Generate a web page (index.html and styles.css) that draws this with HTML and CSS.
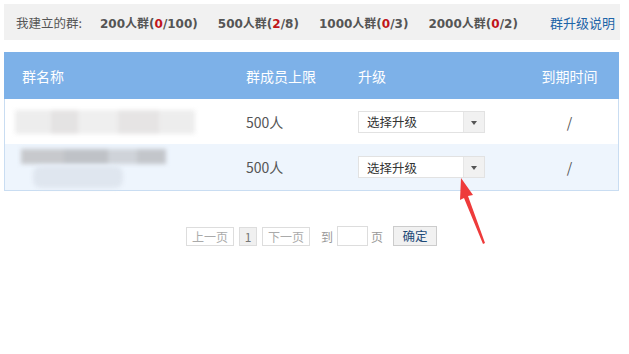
FILE: index.html
```html
<!DOCTYPE html>
<html lang="zh">
<head>
  <meta charset="UTF-8">
  <meta name="viewport" content="width=device-width, initial-scale=1.0">
  <title>群升级</title>
  <link rel="stylesheet" href="styles.css">
</head>
<body>

  <div class="page">
    <div class="group-bar">
      <span class="label">我建立的群:</span>
      <span class="quota">200人群(<em>0</em>/100)</span>
      <span class="quota">500人群(<em>2</em>/8)</span>
      <span class="quota">1000人群(<em>0</em>/3)</span>
      <span class="quota">2000人群(<em>0</em>/2)</span>
      <a class="help" href="#">群升级说明</a>
    </div>

    <div class="group-table">
      <div class="row head">
        <div class="cell name">群名称</div>
        <div class="cell">群成员上限</div>
        <div class="cell">升级</div>
        <div class="cell expire">到期时间</div>
      </div>
      <div class="row">
        <div class="cell name">
          <div class="mosaic one"></div>
        </div>
        <div class="cell">500人</div>
        <div class="cell">
          <div class="select"><span>选择升级</span><i class="caret"></i></div>
        </div>
        <div class="cell expire">/</div>
      </div>
      <div class="row alt">
        <div class="cell name">
          <div class="mosaic two"></div>
          <div class="mosaic smear"></div>
        </div>
        <div class="cell">500人</div>
        <div class="cell">
          <div class="select"><span>选择升级</span><i class="caret"></i></div>
        </div>
        <div class="cell expire">/</div>
      </div>
    </div>

    <div class="pager">
      <button class="pg">上一页</button>
      <button class="pg current">1</button>
      <button class="pg">下一页</button>
      <span class="to">到</span>
      <input class="page-input" type="text">
      <span class="unit">页</span>
      <button class="ok">确定</button>
    </div>

    <svg class="arrow" width="40" height="80" viewBox="0 0 40 80">
      <polygon points="10,3 22,20 17,21 34,68 32,69 13,23 9,25" fill="#ee3b3b"/>
    </svg>
  </div>

</body>
</html>
```

FILE: styles.css
```css
body {
  margin: 0;
  background: #fff;
  font-family: "Noto Sans CJK SC", "Microsoft YaHei", sans-serif;
  font-size: 13px;
  color: #555;
}

.page {
  position: relative;
  width: 629px;
  height: 354px;
  padding: 4px 0 0 4px;
  box-sizing: border-box;
}

.group-bar {
  width: 616px;
  height: 36px;
  background: #f1f1f1;
  display: flex;
  align-items: center;
  padding-left: 12px;
  box-sizing: border-box;
  white-space: nowrap;
}

.label {
  color: #555;
  font-size: 12.5px;
  margin-right: 18px;
}

.quota {
  font-family: "DejaVu Sans", "Noto Sans CJK SC", sans-serif;
  font-weight: bold;
  color: #555;
  font-size: 12px;
  margin-right: 20px;
}

.quota em {
  font-style: normal;
  color: #c0151b;
}

.help {
  margin-left: auto;
  margin-right: 5px;
  color: #1d64a8;
  text-decoration: none;
}

.group-table {
  margin-top: 12px;
  width: 615px;
  border: 1px solid #c9ddf2;
  border-top: none;
  box-sizing: border-box;
}

.row {
  display: grid;
  grid-template-columns: 241px 112px 157px 1fr;
  height: 45px;
  align-items: center;
  font-size: 14px;
  color: #555;
}

.row.head {
  height: 47px;
  background: #7db1e8;
  color: #fff;
  margin: 0 -1px;
  padding: 0 1px;
}

.row.alt {
  height: 46px;
  background: #eef5fd;
}

.cell {
  position: relative;
  height: 100%;
  display: flex;
  align-items: center;
}

.cell.name {
  padding-left: 17px;
}

.cell.expire {
  justify-content: center;
  padding-left: 6px;
}

.mosaic {
  position: absolute;
  filter: blur(2px);
}

.mosaic.one {
  left: 10px;
  top: 11px;
  width: 180px;
  height: 24px;
  background: linear-gradient(90deg, #ececec 0 20%, #e2e0e0 20% 35%, #eeeeee 35% 57%, #e4e2e2 57% 80%, #ececec 80%);
  opacity: 0.9;
}

.mosaic.two {
  left: 16px;
  top: 5px;
  width: 145px;
  height: 15px;
  background: linear-gradient(90deg, #c7c9cd 0 30%, #bfc2c7 30% 60%, #cfd3d9 60% 80%, #c3c6cb 80%);
}

.mosaic.smear {
  left: 28px;
  top: 22px;
  width: 90px;
  height: 22px;
  background: #dfe6ef;
  border-radius: 8px;
}

.select {
  width: 127px;
  height: 22px;
  border: 1px solid #e2e2e2;
  background: #fff;
  display: flex;
  align-items: center;
  box-sizing: border-box;
  font-size: 12.5px;
  color: #333;
}

.select span {
  flex: 1;
  padding-left: 8px;
}

.caret {
  width: 20px;
  height: 100%;
  background: #f1f1f1;
  border-left: 1px solid #e6e6e6;
  position: relative;
}

.caret::after {
  content: "";
  position: absolute;
  left: 7px;
  top: 9px;
  border-left: 3.5px solid transparent;
  border-right: 3.5px solid transparent;
  border-top: 4px solid #555;
}

.pager {
  margin-top: 35px;
  display: flex;
  align-items: center;
  padding-left: 182px;
  font-size: 12px;
  color: #999;
}

.pg {
  height: 19px;
  padding: 0 5px;
  margin-right: 5px;
  border: 1px solid #ddd;
  background: #fff;
  color: #aaa;
  font-family: "Noto Sans CJK SC", sans-serif;
  font-size: 12px;
  line-height: 17px;
}

.pg.current {
  background: #f0f0f0;
  color: #777;
  width: 18px;
  padding: 0;
}

.to {
  margin-left: 6px;
  margin-right: 4px;
}

.page-input {
  width: 31px;
  height: 20px;
  border: 1px solid #ddd;
  box-sizing: border-box;
  padding: 0;
}

.unit {
  margin-left: 3px;
  margin-right: 10px;
}

.ok {
  width: 44px;
  height: 20px;
  border: 1px solid #ccc;
  background: #f1f1f1;
  color: #1d4a78;
  font-family: "Noto Sans CJK SC", sans-serif;
  font-size: 12.5px;
  line-height: 18px;
  padding: 0;
}

.arrow {
  position: absolute;
  left: 451px;
  top: 175px;
}
```
